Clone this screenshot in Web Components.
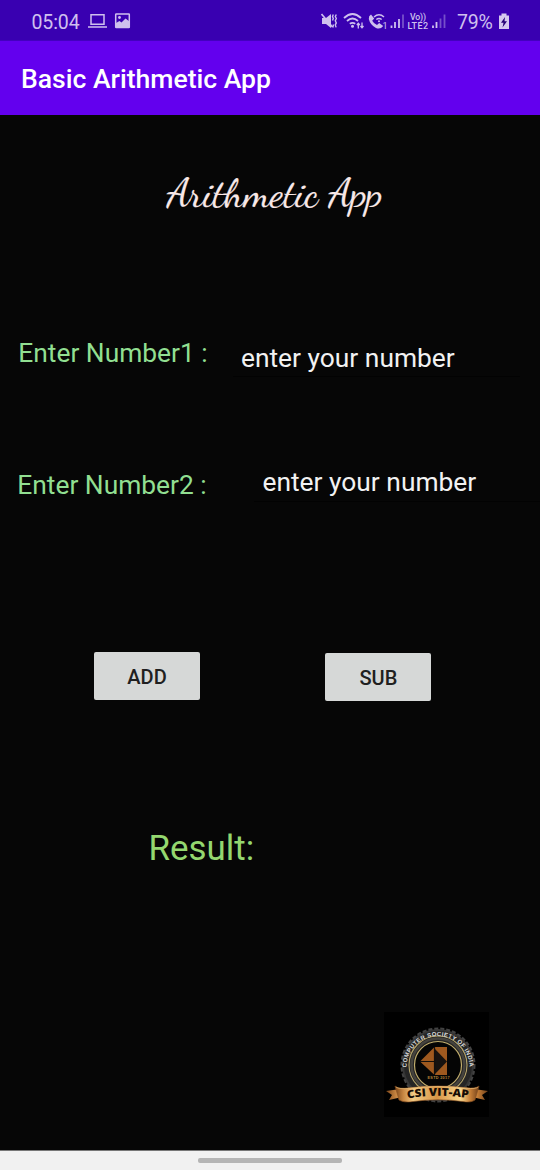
<!DOCTYPE html>
<html lang="en"><head><meta charset="utf-8"><title>Basic Arithmetic App</title>
<style>html,body{margin:0;height:100%;background:#060606}body{font-family:Roboto,sans-serif;overflow:hidden}</style></head>
<body><arithmetic-app></arithmetic-app>
<script>
const define=(name,html)=>customElements.define(name,class extends HTMLElement{
  constructor(){super();this.attachShadow({mode:'open'}).innerHTML=html;}
});
define('status-bar',`<style>
:host{display:flex;height:41px;box-sizing:border-box;padding:0 0 0 31.500px;background:#3900b1;color:#cfc0ee;align-items:center;border-bottom:1px solid #4400c0}
.time{font-size:19.5px;width:56.500px;padding-top:5px;line-height:24px;letter-spacing:-.1px}
.pct{font-size:19.5px;padding-top:5px;line-height:24px;margin-left:11px;width:41px;letter-spacing:-.2px}
svg{display:block;flex:none}.left{margin-right:190px}
</style><span class="time">05:04</span>
<svg class="left" width="43" height="41" viewBox="88 0 43 41" fill="none" stroke="#cfc0ee" stroke-width="1.5"><path d="M91 14.700h13v9.5H91zM88 27h19"/><rect x="115.7" y="13.9" width="13.6" height="13.6" rx=".5"/><path d="M116 23l3.500-2 2 1.500 4-4 4 3v6h-13.500z" fill="#cfc0ee" stroke="none"/><circle cx="119.500" cy="17.500" r="1.4" fill="#cfc0ee" stroke="none"/></svg>
<svg width="125" height="41" viewBox="321 -.5 125 41" fill="none" stroke="#cfc0ee" stroke-width="1.6">
<path d="M322 17.5h4l5-4v14l-5-4h-4z" fill="#cfc0ee" stroke="none"/><path d="M321.500 13.500l11 13" stroke-width="1.6"/><path d="M333.300 14l-.8 2 .8 2-.8 2M336.300 14l-1 2 1 2-1 2.200 1 2.200-1 2 .8 2.500M333.500 24l-.7 3" stroke-width="1.4"/>
<path d="M344 17.500q8.500-8 17 0M347 20.500q5.500-5 11 0M349.800 23.300q2.700-2 5.400 0" stroke-width="1.8"/><circle cx="352.500" cy="25.700" r="1.5" fill="#cfc0ee" stroke="none"/><path d="M358.300 28v-5M356.800 24.500l1.500-1.700 1.500 1.700M362 22v5M360.500 25.500l1.500 1.700 1.500-1.700" stroke-width="1.3"/>
<path d="M371 14l3.200 4-2 2.200q2 3.400 4.800 4.200l2.200-2 4 3q-3 4-7.200 2-5.800-3-7.200-9-.3-2.900 2.200-4.400z" fill="#cfc0ee" stroke="none"/><path d="M374 16.500q5-4.500 10 0M376.300 19q2.700-2.200 5.400 0" stroke-width="1.5"/><circle cx="379" cy="20.800" r="1" fill="#cfc0ee" stroke="none"/><text x="382.500" y="28" fill="#cfc0ee" stroke="none" font-family="Roboto" font-size="9">1</text>
<path d="M391.500 27.500v-2.500M395 27.500v-6M399 27.500v-9" stroke-width="1.8"/><path d="M403 27.500V14" stroke="#7650ca" stroke-width="1.8"/>
<g fill="#cfc0ee" stroke="none" font-family="Roboto" font-weight="500"><text x="410" y="19.200" font-size="8.700" textLength="16">Vo))</text><text x="407.500" y="28.300" font-size="9" textLength="20.500">LTE2</text></g>
<path d="M433 27.500v-2.500M436.500 27.500v-6" stroke-width="1.8"/><path d="M440.500 27.500V18M444.500 27.500V14" stroke="#7650ca" stroke-width="1.8"/></svg>
<span class="pct">79%</span><svg width="12" height="41" viewBox="498 0 12 41"><path d="M501.500 13.500h5v2h2.500V29h-10V15.500h2.500z" fill="#d5c8ef"/><path d="M505 17l-4 5.800h2.500l-1 4.700 4.500-6.300h-2.500z" fill="#260077"/></svg>`);
define('app-bar',`<style>:host{display:flex;height:74px;background:#6300ee;color:#fff;align-items:center;padding-left:21px;box-sizing:border-box}span{font-size:26.550px;font-weight:500;line-height:36px;padding-top:2px}</style><span><slot></slot></span>`);
define('number-field',`<style>:host{display:flex;align-items:flex-start;height:52px;color:#91df91;font-size:26.350px;line-height:30px}
.l{width:var(--lw);padding-top:var(--lt,0);flex:none}.input{box-sizing:border-box;color:#f2f2f2;width:var(--iw);height:var(--ih,39px);padding:var(--it,0) 0 0 8px;border-bottom:1px solid #020202;white-space:nowrap}
</style><span class="l"><slot name="label"></slot></span><span class="input"><slot></slot></span>`);
define('action-button',`<style>:host{display:block;width:106px;height:48px}button{width:100%;height:100%;padding:2px 0 0;border:0;border-radius:2px;background:#d6d8d7;color:#202020;font:500 20px Roboto,sans-serif}</style><button><slot></slot></button>`);
define('club-badge',`<style>:host{display:block;width:105px;height:105px}svg{display:block}</style>
<svg width="105" height="105" viewBox="384 1012 105 105"><defs>
<linearGradient id="g"><stop stop-color="#7b4518"/><stop offset=".1" stop-color="#c98743"/><stop offset=".22" stop-color="#f3cb85"/><stop offset=".5" stop-color="#d79445"/><stop offset=".78" stop-color="#f9d78e"/><stop offset=".9" stop-color="#c47d36"/><stop offset="1" stop-color="#70401a"/></linearGradient>
<path id="arc" d="M406.500 1067.500a31.500 31.500 0 1 1 63 0"/></defs>
<path fill="#000" d="M384 1012h105v105H384z"/><circle cx="438" cy="1065" r="35" fill="#252525" stroke="#363636" stroke-width="2"/><circle cx="438" cy="1065" r="36.500" fill="none" stroke="#424242" stroke-width="2" stroke-dasharray="4 2"/>
<circle cx="438" cy="1065" r="29" fill="#252423" stroke="#b5a46c" stroke-width="1.1"/><circle cx="438" cy="1065" r="26.500" fill="none" stroke="#45433e" stroke-width="2.500"/><circle cx="438" cy="1065" r="23.500" fill="#050505" stroke="#c1ad6c" stroke-width="1.200"/>
<text fill="#ddd" font-family="Liberation Sans" font-size="6" font-weight="700"><textPath href="#arc" textLength="98">COMPUTER SOCIETY OF INDIA</textPath></text>
<path d="M420 1061.500L434.500 1047H447v28h-12.500z" fill="#9f591f"/><path d="M434.500 1048.500l12.500 13-12.500 13z" fill="#17120f"/><path d="M420 1061.500h15M434.500 1047v28" stroke="#15100c" stroke-width="1.200"/>
<text x="427.500" y="1079" fill="#b98539" font-family="Liberation Sans" font-size="3.800" font-weight="700" textLength="22">ESTD 2017</text>
<path d="M386 1091l14-2 2 8-13 3 3-5zM488 1091l-14-2-2 8 13 3-3-5z" fill="url(#g)"/><path d="M395 1086q3 3.500 15 1.700 28-3.500 56 0 10 1.300 13-1.700l-4 14q-4 3-12 1.500-25-3.500-50 0-9 1.500-14-1.500z" fill="url(#g)" stroke="#895121" stroke-width=".6"/><path d="M396 1087q3 2.500 14 1.200 28-3.500 56 0 10 1 12-1.200" fill="none" stroke="#efc17a" stroke-width=".7"/>
<path id="rib" d="M407.500 1098.500Q438 1093 470 1098.500" fill="none"/><text fill="#170d05" font-family="Open Sans" font-size="11" font-weight="800"><textPath href="#rib" textLength="61" lengthAdjust="spacingAndGlyphs">CSI VIT-AP</textPath></text></svg>`);
define('navigation-pill',`<style>:host{display:flex;justify-content:center;height:20px;box-sizing:border-box;padding-top:7px;background:#f1f1f1;border-top:1px solid #777}i{width:144px;height:4.500px;border-radius:2px;background:#b5b5b5}</style><i></i>`);
define('arithmetic-app',`<style>
:host{display:flex;flex-direction:column;width:540px;height:1170px;background:#060606}
main{flex:1;display:flex;flex-direction:column;align-items:flex-start;min-height:0}
h1{margin:52px 0 0 166px;width:220px;height:56px;font-weight:400}h1 svg{display:block;overflow:visible}
.one{margin:115px 0 0 18.300px;--lw:214.700px;--iw:287px;--it:4.500px}
.two{margin:76px 0 0 17.300px;--lw:237.200px;--iw:285.500px;--lt:4px;--it:.5px;--ih:36px}
.buttons{display:flex;align-items:flex-start;gap:125.400px;margin:131px 0 0 94px;padding-top:3px}.buttons action-button+action-button{margin-top:1px}
.result{margin:126px 0 0 148.500px;font-size:34.900px;line-height:44px;color:#94d76f}
club-badge{margin:141px 0 0 384px}navigation-pill{flex:none}
</style><status-bar></status-bar><app-bar>Basic Arithmetic App</app-bar><main>
<h1><svg width="220" height="56"><text x="1" y="38.500" font-family="'Dancing Script',cursive" font-size="40" fill="#f8e8e8" stroke="#f8e8e8" stroke-width=".15" textLength="215.500" lengthAdjust="spacingAndGlyphs">Arithmetic App</text></svg></h1>
<number-field class="one"><span slot="label">Enter Number1 :</span>enter your number</number-field>
<number-field class="two"><span slot="label">Enter Number2 :</span>enter your number</number-field>
<div class="buttons"><action-button>ADD</action-button><action-button>SUB</action-button></div>
<div class="result">Result:</div><club-badge></club-badge></main><navigation-pill></navigation-pill>`);
</script></body></html>
